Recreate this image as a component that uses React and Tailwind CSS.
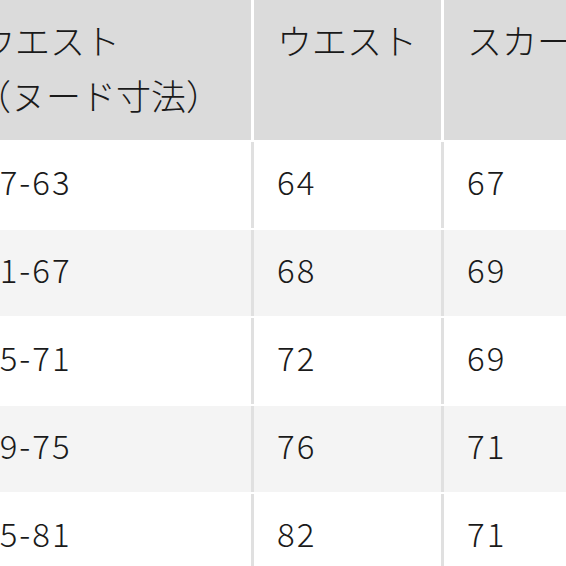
const rows = [
  ["57-63", "64", "67"],
  ["61-67", "68", "69"],
  ["65-71", "72", "69"],
  ["69-75", "76", "71"],
  ["75-81", "82", "71"],
];

const font = {
  fontFamily: '"Noto Sans CJK JP", "Noto Sans", sans-serif',
};

const App = () => {
  return (
    <div
      className="w-[566px] h-[566px] overflow-hidden bg-white text-[#1a1a1a] font-light"
      style={font}
    >
      <div className="ml-[-43px] w-[740px] flex flex-col gap-[2px]">
        <div className="flex gap-[3px] bg-white">
          <div className="w-[294px] h-[140px] bg-[#dbdbdb] px-[23px] pt-[12px] text-[35px] leading-[55px]">
            <div>ウエスト</div>
            <div className="ml-[-4px]">（ヌード寸法）</div>
          </div>
          <div className="w-[187px] h-[140px] bg-[#dbdbdb] px-[23px] pt-[12px] text-[35px] leading-[55px]">
            ウエスト
          </div>
          <div className="flex-1 h-[140px] bg-[#dbdbdb] px-[23px] pt-[12px] text-[35px] leading-[55px] whitespace-nowrap">
            スカート丈
          </div>
        </div>

        {rows.map((r, i) => {
          const bg = i % 2 === 0 ? "bg-white" : "bg-[#f4f4f4]";
          return (
            <div key={i} className="flex gap-[3px] bg-[#e0e0e0]">
              <div className={`w-[294px] h-[86px] ${bg} px-[23px] pb-[6px] flex items-center text-[33px] tracking-[2px]`}>
                {r[0]}
              </div>
              <div className={`w-[187px] h-[86px] ${bg} px-[23px] pb-[6px] flex items-center text-[33px] tracking-[2px]`}>
                {r[1]}
              </div>
              <div className={`flex-1 h-[86px] ${bg} px-[23px] pb-[6px] flex items-center text-[33px] tracking-[2px]`}>
                {r[2]}
              </div>
            </div>
          );
        })}
      </div>
    </div>
  );
};

export default App;
